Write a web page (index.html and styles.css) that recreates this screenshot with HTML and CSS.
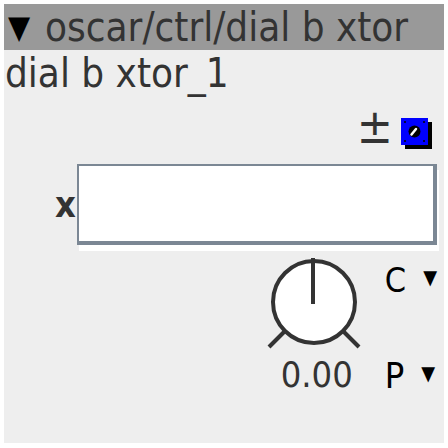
FILE: index.html
```html
<!DOCTYPE html>
<html lang="en">
<head>
    <meta charset="UTF-8">
    <title>dial b xtor</title>
    <link rel="stylesheet" href="styles.css">
</head>
<body>
    <div class="panel">
        <div class="title"><span class="caret">▼</span><span class="path">oscar/ctrl/dial b xtor</span></div>
        <div class="name">dial b xtor_1</div>

        <div class="tools">
            <span class="plusminus">±</span>
            <svg class="swatch" width="33" height="34" viewBox="0 0 33 34">
                <rect x="5" y="6" width="27" height="27" fill="#000"/>
                <rect x="1" y="2" width="27" height="27" fill="#0000ff"/>
                <circle cx="5" cy="6" r="1" fill="#000"/>
                <circle cx="24" cy="6" r="1" fill="#000"/>
                <circle cx="5" cy="25" r="1" fill="#000"/>
                <circle cx="24" cy="25" r="1" fill="#000"/>
                <circle cx="14.5" cy="15.5" r="6" fill="#000"/>
                <path d="M11.5 18.5 L16 13" stroke="#fff" stroke-width="2.5" stroke-linecap="round"/>
            </svg>
        </div>

        <div class="field">
            <span class="label">x</span>
            <div class="box"></div>
        </div>

        <div class="dial-row">
            <div class="dial">
                <svg width="94" height="92" viewBox="0 0 94 92">
                    <circle cx="47" cy="45" r="41" fill="#fff" stroke="#333" stroke-width="4"/>
                    <line x1="46" y1="1" x2="46" y2="47" stroke="#333" stroke-width="4"/>
                    <line x1="18" y1="74" x2="2" y2="90" stroke="#333" stroke-width="4"/>
                    <line x1="76" y1="74" x2="92" y2="90" stroke="#333" stroke-width="4"/>
                </svg>
                <div class="value">0.00</div>
            </div>
            <div class="modes">
                <div class="mode mode-c">C<span class="arrow">▼</span></div>
                <div class="mode mode-p">P<span class="arrow">▼</span></div>
            </div>
        </div>
    </div>
</body>
</html>
```

FILE: styles.css
```css
body {
    margin: 0;
    padding: 4px;
    background: #fff;
    font-family: 'DejaVu Sans Condensed', 'DejaVu Sans', sans-serif;
    color: #333;
}
.panel {
    width: 440px;
    height: 439px;
    background: #eee;
}
.title {
    display: flex;
    align-items: center;
    height: 46px;
    background: #999;
    font-size: 40px;
    white-space: nowrap;
}
.caret {
    color: #000;
    font-size: 32px;
    margin-left: 4px;
    width: 37px;
}
.name {
    height: 46px;
    line-height: 46px;
    font-size: 40px;
    padding-left: 1px;
}
.tools {
    display: flex;
    justify-content: flex-end;
    align-items: center;
    gap: 7px;
    height: 46px;
    margin-top: 14px;
    padding-right: 11px;
}
.plusminus {
    font-size: 48px;
    line-height: 46px;
    margin-top: -14px;
}
.swatch {
    display: block;
}
.field {
    display: flex;
    justify-content: flex-end;
    align-items: center;
    margin-top: 8px;
    padding-right: 7px;
}
.label {
    font-size: 36px;
    font-weight: bold;
    margin-right: 1px;
}
.box {
    width: 354px;
    height: 75px;
    background: #fff;
    border-style: solid;
    border-color: #7b8794;
    border-width: 2px 4px 4px 2px;
    box-shadow: 2px 6px 0 #fff;
}
.dial-row {
    display: flex;
    justify-content: flex-end;
    margin-top: 12px;
    padding-right: 7px;
}
.dial {
    display: flex;
    flex-direction: column;
    align-items: center;
}
.dial svg {
    display: block;
}
.value {
    font-size: 36px;
    line-height: 40px;
    margin-top: 6px;
    margin-left: 6px;
}
.modes {
    display: flex;
    flex-direction: column;
    margin-left: 24px;
    color: #000;
}
.mode {
    white-space: nowrap;
}
.mode-c {
    font-size: 34px;
    height: 96px;
    line-height: 40px;
}
.mode-p {
    font-size: 36px;
    line-height: 40px;
}
.arrow {
    font-size: 20px;
    vertical-align: 8px;
    margin-left: 17px;
}
```
